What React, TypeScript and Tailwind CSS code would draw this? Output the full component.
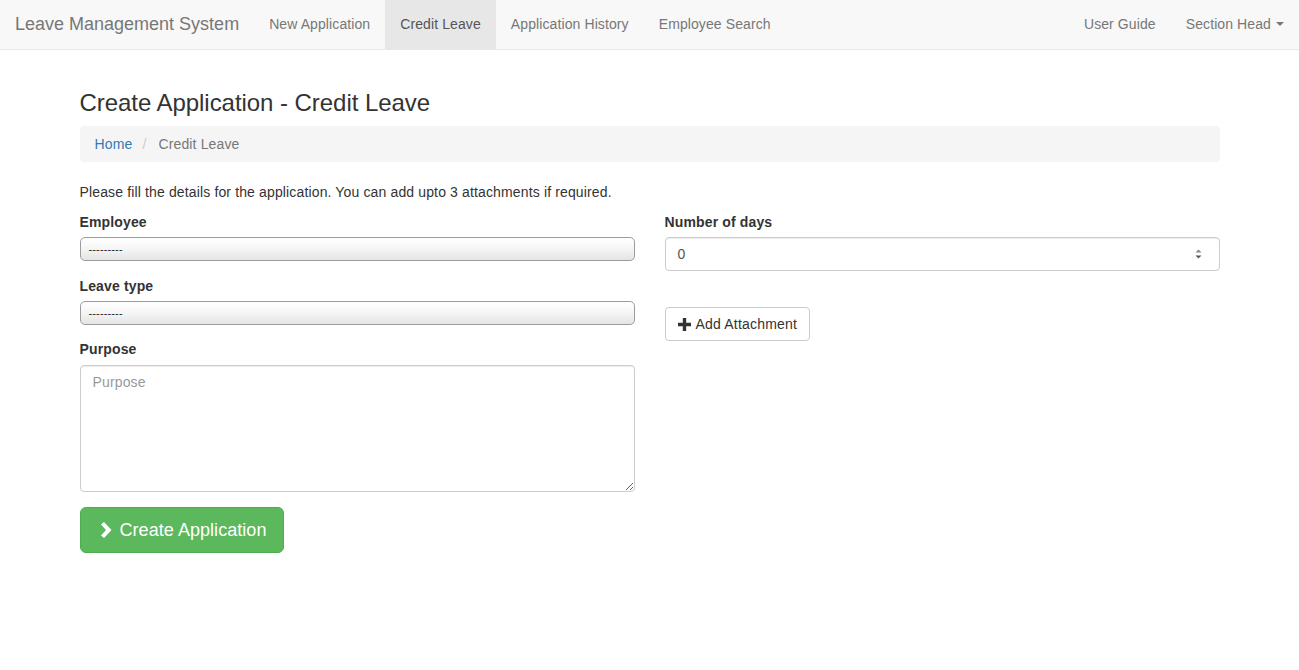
import React from 'react'

const navLinks = ['New Application', 'Credit Leave', 'Application History', 'Employee Search']

function FakeSelect() {
  return (
    <div className="mt-[1px] h-[24px] w-full rounded-[5px] border border-[#9c9c9c] bg-gradient-to-b from-white via-[#f5f5f5] to-[#e4e4e4] px-[8px] text-[11px] leading-[22px] text-[#222] shadow-[inset_0_1px_0_#fff]">
      ---------
    </div>
  )
}

export default function App() {
  return (
    <div className="min-h-screen bg-white text-[14px] leading-[20px] tracking-[0.14px] text-[#333]" style={{ fontFamily: '"Liberation Sans", Arial, sans-serif' }}>
      {/* Navbar */}
      <nav className="mb-[20px] flex h-[50px] items-stretch border-b border-[#e7e7e7] bg-[#f8f8f8] px-[15px] pb-[2px] tracking-[0.1px]">
        <div className="ml-[-15px] flex items-center px-[15px] text-[18px] tracking-normal text-[#777]">Leave Management System</div>
        <ul className="flex">
          {navLinks.map((l) => (
            <li
              key={l}
              className={
                l === 'Credit Leave'
                  ? 'mb-[-2px] flex items-center bg-[#e7e7e7] px-[15px] pb-[2px] text-[#555]'
                  : 'flex items-center px-[15px] text-[#777]'
              }
            >
              {l}
            </li>
          ))}
        </ul>
        <ul className="ml-auto mr-[-15px] flex">
          <li className="flex items-center px-[15px] text-[#777]">User Guide</li>
          <li className="flex items-center px-[15px] text-[#777]">
            Section Head
            <span className="ml-[5px] inline-block h-0 w-0 border-x-[4px] border-t-[4px] border-x-transparent border-t-[#777]" />
          </li>
        </ul>
      </nav>

      <div className="mx-auto flow-root w-[1170px] px-[15px]">
        <h3 className="mb-[10px] mt-[20px] text-[24px] leading-[26.4px] font-medium tracking-[-0.05px] text-[#333]">
          Create Application - Credit Leave
        </h3>

        <ol className="mb-[20px] flex rounded-[4px] bg-[#f5f5f5] px-[15px] py-[8px]">
          <li className="text-[#337ab7]">Home</li>
          <li className="ml-[10px] text-[#ccc]">/</li>
          <li className="ml-[12px] text-[#777]">Credit Leave</li>
        </ol>

        <p className="mb-[10px]">Please fill the details for the application. You can add upto 3 attachments if required.</p>

        <div className="mx-[-15px] flex">
          {/* Left column */}
          <div className="w-1/2 px-[15px]">
            <div className="mb-[15px]">
              <label className="mb-[5px] block font-bold">Employee</label>
              <FakeSelect />
            </div>
            <div className="mb-[15px]">
              <label className="mb-[5px] block font-bold">Leave type</label>
              <FakeSelect />
            </div>
            <div className="mb-[15px]">
              <label className="mb-[6px] mt-[-1px] block font-bold">Purpose</label>
              <textarea
                placeholder="Purpose"
                className="block h-[127px] w-full rounded-[4px] border border-[#ccc] px-[12px] py-[6px] text-[14px] leading-[20px] text-[#555] shadow-[inset_0_1px_1px_rgba(0,0,0,0.075)] outline-none placeholder:text-[#999]"
              />
            </div>
            <button className="flex h-[46px] items-center gap-[6px] rounded-[6px] border border-[#4cae4c] bg-[#5cb85c] px-[16px] text-[18px] tracking-[0.05px] text-white">
              <svg width="16" height="16" viewBox="0 0 16 16" className="mr-[1px]">
                <path d="M4 2.5 L7 0 L14.5 8 L7 16 L4 13.5 L9 8 Z" fill="#fff" />
              </svg>
              Create Application
            </button>
          </div>

          {/* Right column */}
          <div className="w-1/2 px-[15px]">
            <div className="mb-[15px]">
              <label className="mb-[5px] block font-bold">Number of days</label>
              <div className="flex h-[34px] items-center rounded-[4px] border border-[#ccc] pl-[12px] pr-[17px] text-[#555] shadow-[inset_0_1px_1px_rgba(0,0,0,0.075)]">
                <span className="flex-1">0</span>
                <svg width="7" height="12" viewBox="0 0 7 12">
                  <path d="M3.5 1.5 L6.5 4.5 L0.5 4.5 Z" fill="#888" />
                  <path d="M3.5 10.5 L6.5 7.5 L0.5 7.5 Z" fill="#555" />
                </svg>
              </div>
            </div>
            <div className="h-[21px]" />
            <button className="flex h-[34px] items-center gap-[5px] rounded-[4px] border border-[#ccc] bg-white px-[12px] text-[14px] tracking-[0.2px] text-[#333]">
              <svg width="13" height="13" viewBox="0 0 13 13">
                <path d="M4.8 0 H8.2 V4.8 H13 V8.2 H8.2 V13 H4.8 V8.2 H0 V4.8 H4.8 Z" fill="#333" />
              </svg>
              Add Attachment
            </button>
          </div>
        </div>
      </div>
    </div>
  )
}
